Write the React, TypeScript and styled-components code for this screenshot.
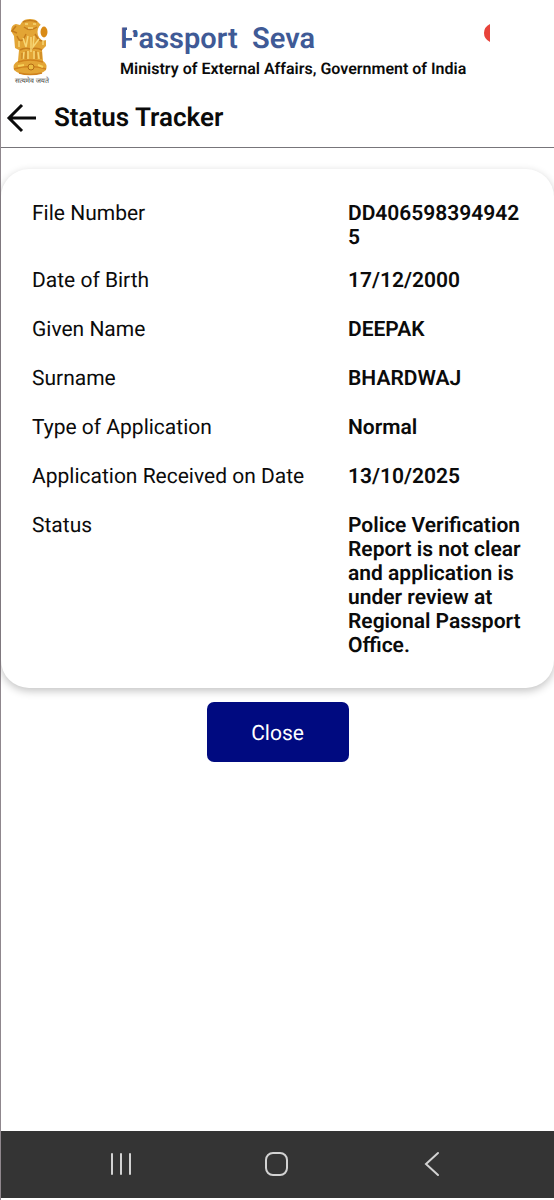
import React from "react";
import styled, { createGlobalStyle } from "styled-components";

const GlobalStyle = createGlobalStyle`
  *, *::before, *::after { box-sizing: border-box; }
  body {
    margin: 0;
    background: #fff;
    color: #0b0b0b;
    font-family: Roboto, "Liberation Sans", sans-serif;
    text-rendering: geometricPrecision;
  }
`;

const Screen = styled.div`
  display: flex;
  flex-direction: column;
  min-height: 100vh;
  padding-bottom: 2px;
  border-left: 1px solid #8f878d;
`;

const Header = styled.header`
  display: flex;
  align-items: flex-start;
  padding: 16px 64px 0 9px;
  height: 88px;
`;

const EmblemBox = styled.div`
  width: 110px;
  flex: none;
`;

const Brand = styled.div`
  flex: 1;
  padding-top: 6px;
`;

const BrandName = styled.div`
  font-size: 29px;
  line-height: 34px;
  font-weight: 600;
  color: #3f5a96;
  white-space: pre;
`;

const Initial = styled.span`
  position: relative;
`;

const Notch = styled.svg`
  position: absolute;
  left: 0;
  top: 0;
`;

const Ministry = styled.div`
  font-size: 16px;
  line-height: 26px;
  font-weight: 600;
  white-space: nowrap;
`;

const TitleBar = styled.div`
  display: flex;
  align-items: center;
  gap: 16px;
  height: 60px;
  padding-left: 5px;
  border-bottom: 1px solid #77757a;
`;

const IconButton = styled.button`
  display: flex;
  padding: 0;
  border: 0;
  background: none;
  color: inherit;
  cursor: pointer;
`;

const Title = styled.h1`
  margin: 0;
  font-size: 26px;
  line-height: 32px;
  font-weight: 600;
`;

const Main = styled.main`
  flex: 1;
  display: flex;
  flex-direction: column;
  align-items: center;
  padding-top: 21px;
  gap: 14px;
`;

const Card = styled.dl`
  width: 100%;
  margin: 0;
  padding: 33px 32px 30px 31px;
  display: flex;
  flex-direction: column;
  gap: 19px;
  border-radius: 28px;
  background: #fff;
  box-shadow: 0 3px 8px rgba(0, 0, 0, 0.24);
`;

const Row = styled.div`
  display: grid;
  grid-template-columns: 316fr 174fr;
  min-height: 30px;
  font-size: 21px;
  line-height: 24px;
`;

const Label = styled.dt``;

const Value = styled.dd`
  margin: 0;
  font-weight: 600;
  overflow-wrap: anywhere;
`;

const CloseButton = styled.button`
  width: 142px;
  height: 60px;
  padding: 3px 0 0;
  border: 0;
  border-radius: 7px;
  background: #000a80;
  color: #fff;
  font: 400 21px/24px Roboto, "Liberation Sans", sans-serif;
  text-rendering: inherit;
  cursor: pointer;
`;

const SystemNav = styled.nav`
  display: flex;
  justify-content: space-between;
  align-items: center;
  height: 67px;
  padding: 0 108px 2px 106px;
  background: #343434;
  color: #d2d2d2;
`;

const details = [
  ["File Number", "DD4065983949425"],
  ["Date of Birth", "17/12/2000"],
  ["Given Name", "DEEPAK"],
  ["Surname", "BHARDWAJ"],
  ["Type of Application", "Normal"],
  ["Application Received on Date", "13/10/2025"],
  ["Status", "Police Verification Report is not clear and application is under review at Regional Passport Office."],
];

const Emblem = () => (
  <svg width="42" height="70" viewBox="0 0 42 70" role="img" aria-label="State emblem">
    <path d="M12 6Q14 3 20 3Q26 3 28 6L31 9Q38 7 38 14L36 18L36 30L32 34L33 45Q38 48 36 54Q31 59 20 59Q9 59 4 54Q2 48 8 45L9 34L5 32L4 20L1 15Q1 9 6 8L10 9Z" fill="#e3a535" />
    <path d="M13 6Q20 3 27 6M14 11Q20 16 27 11M6 10L2 15L7 17M7 20Q11 30 16 18M34 21Q32 30 25 18M10 34Q15 31 20 33Q27 31 32 34" fill="none" stroke="#c57c1d" strokeWidth="1.5" />
    <path d="M15 8H18M23 8H26M18 12H23M13 22L16 31L18 20M24 20L23 31L29 23M21 21V36M9 25V31M33 24V29M14 36L13 43M18 35V43M24 35V43M28 36L29 43" fill="none" stroke="#f7d675" strokeWidth="1.5" />
    <path d="M12 37V43M16 35V43M26 35V43M31 36V43" stroke="#c37b1b" />
    <path d="M8 46Q20 42 33 46M4 53Q20 48 36 53M9 57Q20 60 32 57" fill="none" stroke="#d0821d" strokeWidth="1.5" />
    <circle cx="21" cy="51" r="3" fill="#edbd42" stroke="#b46b14" />
    <path d="M8 50L14 49M28 49L33 51" stroke="#f7d35b" strokeWidth="2" />
    <ellipse cx="34" cy="16" rx="5" ry="7" fill="#d98a15" stroke="#fff" strokeWidth="3" />
    <text x="5" y="67" fontSize="7" fill="#444">सत्यमेव जयते</text>
  </svg>
);

const Alert = styled.svg`
  flex: none;
  margin-top: 8px;
`;

export default function App() {
  return (
    <Screen>
      <GlobalStyle />
      <Header>
        <EmblemBox><Emblem /></EmblemBox>
        <Brand>
          <BrandName>
            <Initial>
              P
              <Notch width="20" height="34" viewBox="0 0 20 34" aria-hidden="true">
                <path d="M7 2H19V8H14Q11 9 12 13L14 15H18V20H12V16H6V8H7ZM6 20H18V29H6Z" fill="#fff" />
              </Notch>
            </Initial>
            {"assport  Seva"}
          </BrandName>
          <Ministry>Ministry of External Affairs, Government of India</Ministry>
        </Brand>
        <Alert width="6" height="18" viewBox="0 0 6 18" aria-hidden="true">
          <path d="M6 0Q0 3 0 9T6 18Z" fill="#e8433a" />
        </Alert>
      </Header>
      <TitleBar>
        <IconButton type="button" aria-label="Back">
          <svg width="32" height="32" viewBox="0 0 32 32" fill="none" stroke="currentColor" strokeWidth="3">
            <path d="M30 16H3M16 3L3 16L16 29" />
          </svg>
        </IconButton>
        <Title>Status Tracker</Title>
      </TitleBar>
      <Main>
        <Card>
          {details.map(([label, value]) => (
            <Row key={label}>
              <Label>{label}</Label>
              <Value>{value}</Value>
            </Row>
          ))}
        </Card>
        <CloseButton type="button">Close</CloseButton>
      </Main>
      <SystemNav aria-label="System">
        <IconButton type="button" aria-label="Recent apps">
          <svg width="28" height="28" viewBox="0 0 28 28" fill="none" stroke="currentColor" strokeWidth="2" strokeLinecap="round">
            <path d="M5 4V24M14 4V24M23 4V24" />
          </svg>
        </IconButton>
        <IconButton type="button" aria-label="Home">
          <svg width="28" height="28" viewBox="0 0 28 28" fill="none" stroke="currentColor" strokeWidth="2">
            <rect x="3" y="3" width="21" height="22" rx="7" />
          </svg>
        </IconButton>
        <IconButton type="button" aria-label="Back">
          <svg width="28" height="28" viewBox="0 0 28 28" fill="none" stroke="currentColor" strokeWidth="2" strokeLinecap="round">
            <path d="M20 3L8 14L20 25" />
          </svg>
        </IconButton>
      </SystemNav>
    </Screen>
  );
}
